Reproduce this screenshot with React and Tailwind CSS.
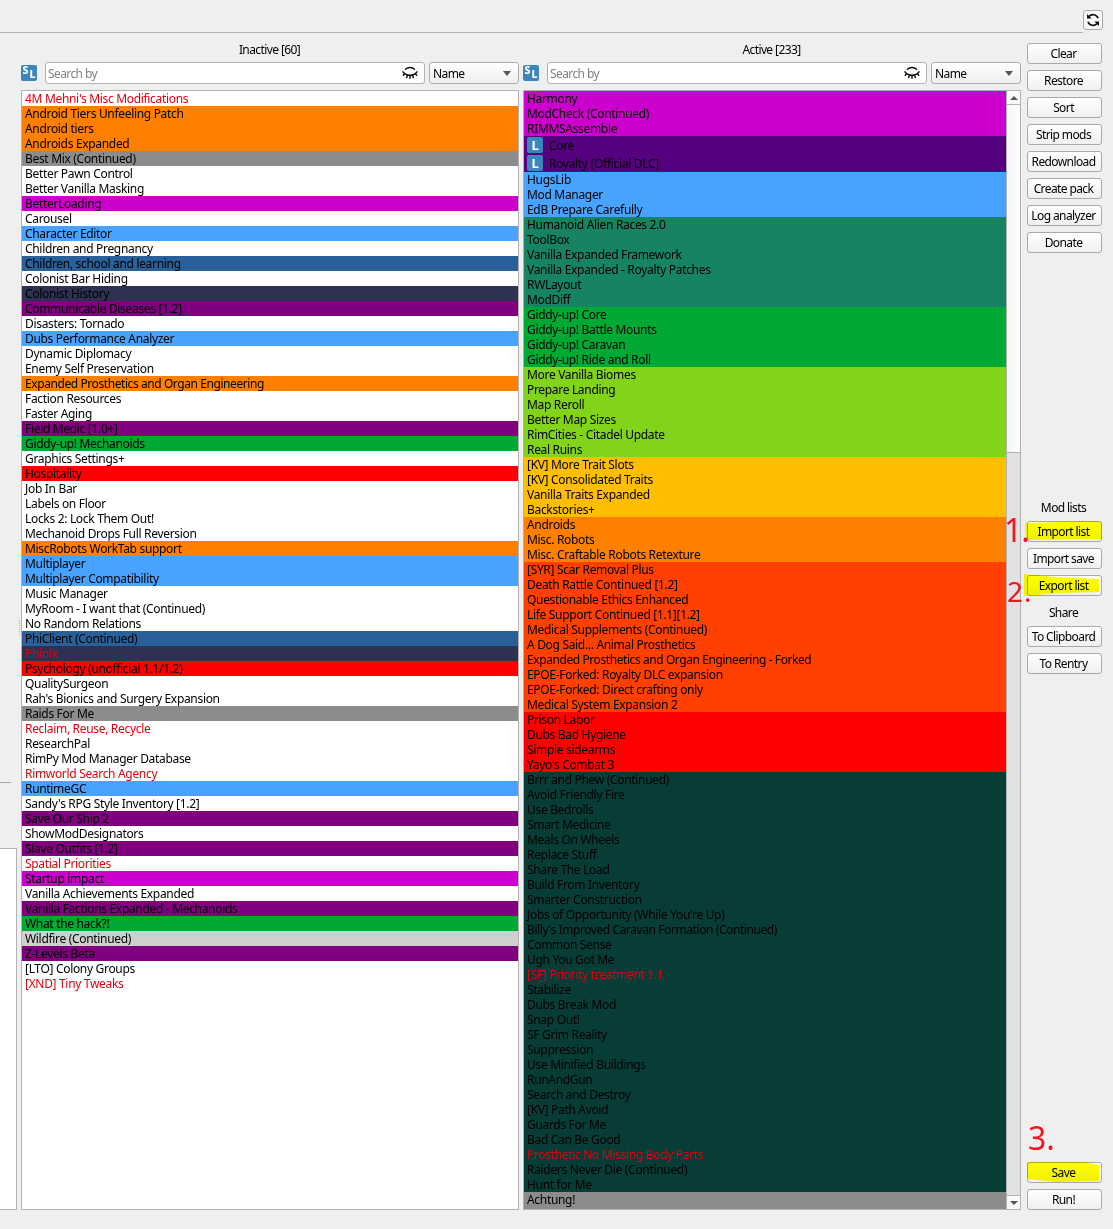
import React from "react";

const C = {
  orange: "bg-[#ff8000]", gray: "bg-[#8c8c8c]", magenta: "bg-[#cc00cc]", sky: "bg-[#47a3ff]",
  steel: "bg-[#2a6099]", navy: "bg-[#2e3152]", purple: "bg-[#800080]", green: "bg-[#00a933]",
  red: "bg-[#ff0000]", silver: "bg-[#cfcfcf]", indigo: "bg-[#55007f]", teal: "bg-[#168363]",
  lime: "bg-[#81d41a]", amber: "bg-[#ffbf00]", vermilion: "bg-[#ff4000]", pine: "bg-[#083d37]",
  none: "",
};

const INACTIVE = [
  ["4M Mehni's Misc Modifications", "none", 1],
  ["Android Tiers Unfeeling Patch", "orange"],
  ["Android tiers", "orange"],
  ["Androids Expanded", "orange"],
  ["Best Mix (Continued)", "gray"],
  ["Better Pawn Control", "none"],
  ["Better Vanilla Masking", "none"],
  ["BetterLoading", "magenta"],
  ["Carousel", "none"],
  ["Character Editor", "sky"],
  ["Children and Pregnancy", "none"],
  ["Children, school and learning", "steel"],
  ["Colonist Bar Hiding", "none"],
  ["Colonist History", "navy"],
  ["Communicable Diseases [1.2]", "purple"],
  ["Disasters: Tornado", "none"],
  ["Dubs Performance Analyzer", "sky"],
  ["Dynamic Diplomacy", "none"],
  ["Enemy Self Preservation", "none"],
  ["Expanded Prosthetics and Organ Engineering", "orange"],
  ["Faction Resources", "none"],
  ["Faster Aging", "none"],
  ["Field Medic [1.0+]", "purple"],
  ["Giddy-up! Mechanoids", "green"],
  ["Graphics Settings+", "none"],
  ["Hospitality", "red"],
  ["Job In Bar", "none"],
  ["Labels on Floor", "none"],
  ["Locks 2: Lock Them Out!", "none"],
  ["Mechanoid Drops Full Reversion", "none"],
  ["MiscRobots WorkTab support", "orange"],
  ["Multiplayer", "sky"],
  ["Multiplayer Compatibility", "sky"],
  ["Music Manager", "none"],
  ["MyRoom - I want that (Continued)", "none"],
  ["No Random Relations", "none"],
  ["PhiClient (Continued)", "steel"],
  ["Phinix", "navy", 1],
  ["Psychology (unofficial 1.1/1.2)", "red"],
  ["QualitySurgeon", "none"],
  ["Rah's Bionics and Surgery Expansion", "none"],
  ["Raids For Me", "gray"],
  ["Reclaim, Reuse, Recycle", "none", 1],
  ["ResearchPal", "none"],
  ["RimPy Mod Manager Database", "none"],
  ["Rimworld Search Agency", "none", 1],
  ["RuntimeGC", "sky"],
  ["Sandy's RPG Style Inventory [1.2]", "none"],
  ["Save Our Ship 2", "purple"],
  ["ShowModDesignators", "none"],
  ["Slave Outfits [1.2]", "purple"],
  ["Spatial Priorities", "none", 1],
  ["Startup impact", "magenta"],
  ["Vanilla Achievements Expanded", "none"],
  ["Vanilla Factions Expanded - Mechanoids", "purple"],
  ["What the hack?!", "green"],
  ["Wildfire (Continued)", "silver"],
  ["Z-Levels Beta", "purple"],
  ["[LTO] Colony Groups", "none"],
  ["[XND] Tiny Tweaks", "none", 1],
];

const GROUPS = [
  ["magenta", ["Harmony", "ModCheck (Continued)", "RIMMSAssemble"]],
  ["indigo", ["Core", "Royalty [Official DLC]"]],
  ["sky", ["HugsLib", "Mod Manager", "EdB Prepare Carefully"]],
  ["teal", ["Humanoid Alien Races 2.0", "ToolBox", "Vanilla Expanded Framework", "Vanilla Expanded - Royalty Patches", "RWLayout", "ModDiff"]],
  ["green", ["Giddy-up! Core", "Giddy-up! Battle Mounts", "Giddy-up! Caravan", "Giddy-up! Ride and Roll"]],
  ["lime", ["More Vanilla Biomes", "Prepare Landing", "Map Reroll", "Better Map Sizes", "RimCities - Citadel Update", "Real Ruins"]],
  ["amber", ["[KV] More Trait Slots", "[KV] Consolidated Traits", "Vanilla Traits Expanded", "Backstories+"]],
  ["orange", ["Androids", "Misc. Robots", "Misc. Craftable Robots Retexture"]],
  ["vermilion", ["[SYR] Scar Removal Plus", "Death Rattle Continued [1.2]", "Questionable Ethics Enhanced", "Life Support Continued [1.1][1.2]", "Medical Supplements (Continued)", "A Dog Said... Animal Prosthetics", "Expanded Prosthetics and Organ Engineering - Forked", "EPOE-Forked: Royalty DLC expansion", "EPOE-Forked: Direct crafting only", "Medical System Expansion 2"]],
  ["red", ["Prison Labor", "Dubs Bad Hygiene", "Simple sidearms", "Yayo's Combat 3"]],
  ["pine", ["Brrr and Phew (Continued)", "Avoid Friendly Fire", "Use Bedrolls", "Smart Medicine", "Meals On Wheels", "Replace Stuff", "Share The Load", "Build From Inventory", "Smarter Construction", "Jobs of Opportunity (While You're Up)", "Billy's Improved Caravan Formation (Continued)", "Common Sense", "Ugh You Got Me", "[SF] Priority treatment 1.1", "Stabilize", "Dubs Break Mod", "Snap Out!", "SF Grim Reality", "Suppression", "Use Minified Buildings", "RunAndGun", "Search and Destroy", "[KV] Path Avoid", "Guards For Me", "Bad Can Be Good", "Prosthetic No Missing Body Parts", "Raiders Never Die (Continued)", "Hunt for Me"]],
  ["gray", ["Achtung!"]],
];
const ERRORS = ["[SF] Priority treatment 1.1", "Prosthetic No Missing Body Parts"];

function Row({ name, color, error }) {
  const local = color === "indigo";
  return (
    <div className={`flex shrink-0 items-center pl-[3px] whitespace-pre ${name.length > 40 ? "tracking-[-0.42px]" : "tracking-[-0.32px]"} ${C[color]} ${local ? "h-[18px] gap-[6px]" : "h-[15px]"} ${error ? "text-[#e0000f]" : "text-black"}`}>
      {local && <span className="flex h-4 w-4 items-center justify-center rounded-[2px] bg-[#3c86bd] text-[13px] leading-none font-bold text-white">L</span>}
      <span>{name}</span>
    </div>
  );
}

function SourceIcon() {
  return (
    <div className="mr-2 flex h-4 w-4 shrink-0 justify-center gap-px rounded-[2px] bg-[#3c86bd] text-[10.5px] leading-none font-extrabold tracking-normal text-white">
      <span>S</span>
      <span className="mt-[4px]">L</span>
    </div>
  );
}

function EyeClosed() {
  return (
    <svg width="16" height="14" viewBox="0 0 16 14" fill="none" stroke="#111" strokeWidth="1.5" strokeLinecap="round">
      <path d="M3.4 3.2C5.8 .9 10.2 .9 12.6 3.2" strokeWidth="1.3" />
      <path d="M1 5.8C4 10.3 12 10.3 15 5.8M2.7 7.8 1.3 9.3M5.4 9.2 4.7 11.5M8 9.6v2.7M10.6 9.2l.7 2.3M13.3 7.8l1.4 1.5" />
    </svg>
  );
}

function Panel({ title, children }) {
  return (
    <section className="flex w-[498px] flex-col">
      <h2 className="h-[19px] pr-px text-center leading-[14px]">{title}</h2>
      <div className="flex h-[22px] items-center">
        <SourceIcon />
        <div className="flex h-[22px] w-[380px] items-center justify-between rounded-[3px] border border-[#b2b2b2] bg-white pr-[6px] pl-[2px] text-[#808080]">
          <span>Search by</span>
          <EyeClosed />
        </div>
        <div className="ml-1 flex h-[22px] w-[90px] items-center justify-between rounded-[3px] border border-[#adadad] bg-linear-to-b from-white to-[#eeeeee] pr-[7px] pl-[3px]">
          <span>Name</span>
          <svg width="8" height="5"><path d="M0 0h8L4 5z" fill="#555" /></svg>
        </div>
      </div>
      <div className="mt-[6px] flex h-[1120px] overflow-hidden border border-[#b2b2b2] bg-white">{children}</div>
    </section>
  );
}

const MARKS = {
  import: "M-2 2L66 0L75 1V18L-1 19Z",
  export: "M-3 -1L28 2L72 4V17L30 18L0 21H-3Z",
  save: "M0 0H58L72 3V19L30 20L0 17Z",
};

function Button({ children, mark }) {
  return (
    <button className="relative flex h-[21px] w-[75px] shrink-0 items-center justify-center rounded-[3px] border border-[#a9a9a9] bg-linear-to-b from-white to-[#f0f0f0] pr-[2px] pb-px whitespace-nowrap">
      {mark && (
        <svg className="absolute -top-px -left-px overflow-visible mix-blend-multiply" width="75" height="21">
          <path d={MARKS[mark]} fill="#ffff00" />
        </svg>
      )}
      <span className="relative">{children}</span>
    </button>
  );
}

export default function App() {
  return (
    <div className="relative flex h-[1229px] w-[1113px] flex-col overflow-hidden bg-[#efefef] font-['Noto_Sans','Open_Sans',sans-serif] text-[12px] leading-[15px] tracking-[-0.6px] text-black">
      <header className="flex h-[43px] shrink-0 pt-[10px]">
        <div className="h-[23px] w-[1083px] border-b border-[#b4b4b4]" />
        <button className="flex h-5 w-5 items-center justify-center rounded-[3px] border border-[#a9a9a9] bg-[#fafafa]">
          <svg width="14" height="14" viewBox="0 0 14 14" fill="none" stroke="#111" strokeWidth="1.7">
            <path d="M12 5.3A5.3 5.3 0 0 0 3 3.4M2 8.7a5.3 5.3 0 0 0 9 1.9" />
            <path d="M1 1v4.6h4.6zM13 13V8.4H8.4z" fill="#111" stroke="none" />
          </svg>
        </button>
      </header>
      <main className="flex">
        <aside className="flex w-[21px] shrink-0 flex-col">
          <div className="flex h-[740px] w-[11px] border-b border-[#a9a9a9]">
            <div className="mt-[577px] ml-[19px] h-4 w-px shrink-0 border-l border-dotted border-[#b8b8b8]" />
          </div>
          <div className="mt-[65px] h-[362px] w-[17px] border border-l-0 border-[#b2b2b2] bg-white" />
        </aside>
        <Panel title="Inactive [60]">
          <div className="flex flex-1 flex-col">
            {INACTIVE.map(([n, c, e]) => <Row key={n} name={n} color={c} error={e} />)}
          </div>
        </Panel>
        <div className="w-1 shrink-0" />
        <Panel title="Active [233]">
          <div className="flex flex-1 flex-col bg-[#8c8c8c]">
            {GROUPS.map(([c, names]) => names.map((n) => <Row key={n} name={n} color={c} error={ERRORS.includes(n)} />))}
          </div>
          <div className="flex w-[14px] flex-col border-l border-[#b2b2b2] bg-[#e2e2e2]">
            <div className="flex h-[14px] items-center justify-center border-b border-[#b2b2b2] bg-[#fafafa]">
              <svg width="8" height="4"><path d="M0 4h8L4 0z" fill="#555" /></svg>
            </div>
            <div className="h-[348px] border-b border-[#b2b2b2] bg-linear-to-r from-[#f4f4f4] to-white" />
            <div className="flex-1" />
            <div className="flex h-[14px] items-center justify-center border-t border-[#b2b2b2] bg-[#fafafa]">
              <svg width="8" height="4"><path d="M0 0h8L4 4z" fill="#555" /></svg>
            </div>
          </div>
        </Panel>
        <nav className="ml-[6px] flex h-[1167px] w-[75px] flex-col gap-[6px] text-center">
          <Button>Clear</Button>
          <Button>Restore</Button>
          <Button>Sort</Button>
          <Button>Strip mods</Button>
          <Button>Redownload</Button>
          <Button>Create pack</Button>
          <Button>Log analyzer</Button>
          <Button>Donate</Button>
          <div className="mt-[241px] h-[15px] w-[73px] shrink-0">Mod lists</div>
          <Button mark="import">Import list</Button>
          <Button>Import save</Button>
          <Button mark="export">Export list</Button>
          <div className="mt-[3px] h-[15px] w-[73px] shrink-0">Share</div>
          <Button>To Clipboard</Button>
          <Button>To Rentry</Button>
          <div className="flex-1" />
          <Button mark="save">Save</Button>
          <Button>Run!</Button>
        </nav>
      </main>
      <span className="absolute top-[514px] left-[1004px] text-[32px] leading-8 tracking-[-1px] text-[#f5141c]">1.</span>
      <span className="absolute top-[575px] left-[1007px] text-[28px] leading-8 tracking-[1px] text-[#f5141c]">2.</span>
      <span className="absolute top-[1122px] left-[1028px] text-[32px] leading-8 tracking-normal text-[#f5141c]">3.</span>
    </div>
  );
}
